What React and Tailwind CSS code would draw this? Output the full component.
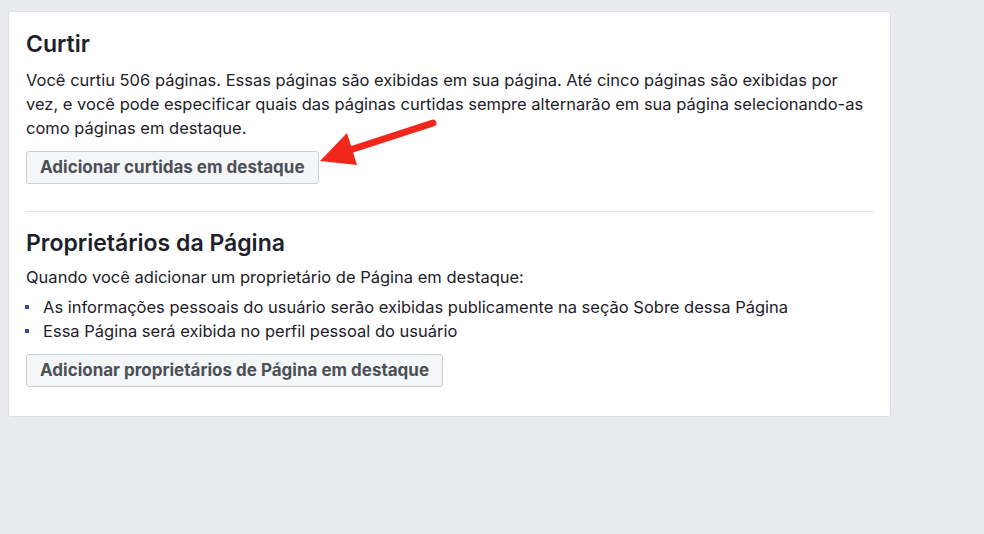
import React from "react";

function Arrow() {
  return (
    <svg className="absolute left-[316px] top-[118px]" width="124" height="52" viewBox="316 118 124 52">
      <line x1="433" y1="123" x2="350" y2="150" stroke="#f2271c" strokeWidth="7" strokeLinecap="round" />
      <polygon points="320,161 347,133 357,165" fill="#f2271c" />
    </svg>
  );
}

export default function App() {
  return (
    <div className="relative w-[984px] h-[534px] bg-[#e9ebee] pt-[11px] pl-[8px] font-['Inter',Arial,sans-serif] text-[#1d2129]">
      <div className="w-[883px] h-[406px] bg-white rounded-[3px] border border-[#dddfe2] px-[17px] pt-[18px]">
        <h2 className="text-[23px] leading-[28px] font-semibold text-[#1d2129]">Curtir</h2>
        <p className="mt-[10px] text-[16.5px] leading-[24px] text-[#1d2129]">
          Você curtiu 506 páginas. Essas páginas são exibidas em sua página. Até cinco páginas são exibidas por vez, e você pode especificar quais das páginas curtidas sempre alternarão em sua página selecionando-as como páginas em destaque.
        </p>
        <button className="mt-[11px] h-[33px] px-[13px] bg-[#f5f6f7] border border-[#ccd0d5] rounded-[3px] text-[17px] font-bold text-[#4b4f56]">
          Adicionar curtidas em destaque
        </button>
        <div className="mt-[27px] h-px bg-[#dddfe2]" />
        <h2 className="mt-[17px] text-[23px] leading-[28px] font-semibold text-[#1d2129]">Proprietários da Página</h2>
        <p className="mt-[8px] text-[16.5px] leading-[24px]">Quando você adicionar um proprietário de Página em destaque:</p>
        <ul className="mt-[6px] text-[16.5px] leading-[24px]">
          <li className="flex items-center">
            <span className="w-[4px] h-[4px] bg-[#3b4b9b] ml-[-1px] mr-[14px]" />
            As informações pessoais do usuário serão exibidas publicamente na seção Sobre dessa Página
          </li>
          <li className="flex items-center">
            <span className="w-[4px] h-[4px] bg-[#3b4b9b] ml-[-1px] mr-[14px]" />
            Essa Página será exibida no perfil pessoal do usuário
          </li>
        </ul>
        <button className="mt-[11px] h-[33px] px-[13px] bg-[#f5f6f7] border border-[#ccd0d5] rounded-[3px] text-[17px] font-bold text-[#4b4f56]">
          Adicionar proprietários de Página em destaque
        </button>
      </div>
      <Arrow />
    </div>
  );
}
